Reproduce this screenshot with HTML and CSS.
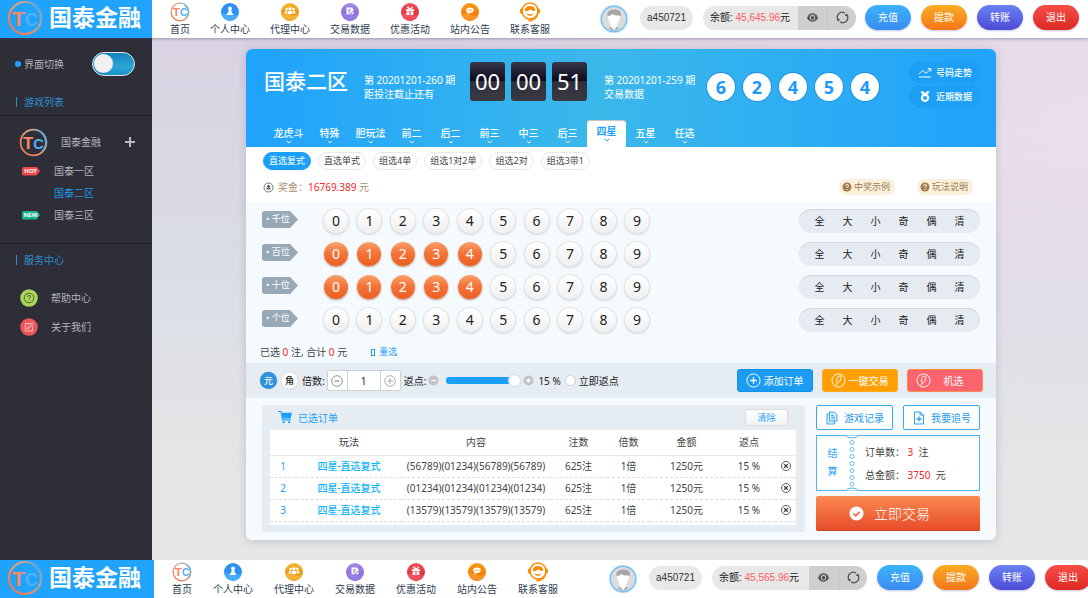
FILE: index.html
```html
<!DOCTYPE html>
<html lang="zh-CN">
<head>
<meta charset="utf-8">
<meta name="viewport" content="width=device-width, initial-scale=1">
<title>国泰金融</title>
<link rel="stylesheet" href="styles.css">
</head>
<body>
<svg class="defs" aria-hidden="true">
  <defs>
    <linearGradient id="ring" x1="1" y1="0" x2="0" y2="1"><stop offset="0" stop-color="#4aa3e8"/><stop offset=".35" stop-color="#d9a97e"/><stop offset="1" stop-color="#f76a4c"/></linearGradient>
    <linearGradient id="gBlue" x1="0" y1="0" x2="0" y2="1"><stop offset="0" stop-color="#2b8cf0"/><stop offset="1" stop-color="#2a9df6"/></linearGradient>
    <linearGradient id="gGold" x1="0" y1="0" x2="0" y2="1"><stop offset="0" stop-color="#f7b52c"/><stop offset="1" stop-color="#e08a0c"/></linearGradient>
    <linearGradient id="gViolet" x1="0" y1="0" x2="0" y2="1"><stop offset="0" stop-color="#a78bec"/><stop offset="1" stop-color="#7a5bd0"/></linearGradient>
    <linearGradient id="gRed" x1="0" y1="0" x2="0" y2="1"><stop offset="0" stop-color="#f2525a"/><stop offset="1" stop-color="#d91f35"/></linearGradient>
    <linearGradient id="gOrange" x1="0" y1="0" x2="0" y2="1"><stop offset="0" stop-color="#ff9c10"/><stop offset="1" stop-color="#ee6c08"/></linearGradient>
  </defs>
  <symbol id="tc" viewBox="0 0 36 36">
    <circle cx="18" cy="18" r="16" fill="none" stroke="url(#ring)" stroke-width="2.200"/>
    <path d="M27 6a15 15 0 0 1 1 23" fill="none" stroke="#4aa3e8" stroke-width="1.600"/>
    <text x="5" y="26" font-family="Liberation Sans" font-weight="700" font-size="21"><tspan fill="#f78a62">T</tspan><tspan fill="#55b0f2" font-size="18">C</tspan></text>
  </symbol>
  <symbol id="n-user" viewBox="0 0 20 20"><circle cx="10" cy="10" r="9" fill="url(#gBlue)"/><path d="M1.500 12.500q4-2 8 0t9 0A9 9 0 0 1 1.500 12.500z" fill="#5db8ff" opacity=".6"/><circle cx="10" cy="6.500" r="2" fill="#fff"/><path d="M8.800 8h2.400l.6 2.400 2 2.600H6.200l2-2.600z" fill="#fff"/></symbol>
  <symbol id="n-agent" viewBox="0 0 20 20"><circle cx="10" cy="10" r="9" fill="url(#gGold)"/><path d="M1.500 12.500q4-2 8 0t9 0A9 9 0 0 1 1.500 12.500z" fill="#ffc54a" opacity=".6"/><g fill="#fff"><circle cx="10" cy="6.600" r="1.700"/><circle cx="6.600" cy="7" r="1.200"/><circle cx="13.400" cy="7" r="1.200"/><path d="M7.500 12q0-3.500 2.500-3.500t2.500 3.500zM4.600 11.500q0-3 2-3l.8.4-.8 2.600zM15.400 11.500q0-3-2-3l-.8.4.8 2.600z"/></g></symbol>
  <symbol id="n-data" viewBox="0 0 20 20"><circle cx="10" cy="10" r="9" fill="url(#gViolet)"/><path d="M1.500 12.500q4-2 8 0t9 0A9 9 0 0 1 1.500 12.500z" fill="#a58bf0" opacity=".6"/><path d="M6.500 5.500h5.200l1.800 1.800v5H6.500z" fill="#fff"/><path d="M8 8h3M8 10h2" stroke="#8a6bdc"/><path d="M10 12l3.500-3" stroke="#8a6bdc" stroke-width="1"/></symbol>
  <symbol id="n-gift" viewBox="0 0 20 20"><circle cx="10" cy="10" r="9" fill="url(#gRed)"/><path d="M1.500 12.500q4-2 8 0t9 0A9 9 0 0 1 1.500 12.500z" fill="#ff6a74" opacity=".6"/><path d="M6 7.200h8v2H6zM6.600 9.800h2.900v3.200H6.600zM10.500 9.800h2.900v3.200h-2.900z" fill="#fff"/><path d="M10 7q-3-.5-2.500-2T10 7q2.500-3 2.500-1.700T10 7z" fill="none" stroke="#fff"/></symbol>
  <symbol id="n-news" viewBox="0 0 20 20"><circle cx="10" cy="10" r="9" fill="url(#gOrange)"/><path d="M1.500 12.500q4-2 8 0t9 0A9 9 0 0 1 1.500 12.500z" fill="#ffa63c" opacity=".6"/><path d="M10 5.500c2.200 0 3.800 1.100 3.800 2.700s-1.600 2.700-3.800 2.700l-2.800 1.300.5-1.900C6.700 9.800 6.200 9 6.200 8.200 6.200 6.600 7.800 5.500 10 5.500z" fill="#fff"/><path d="M8.200 8.200h.8M9.700 8.200h.8M11.200 8.200h.8" stroke="#ef7a10"/></symbol>
  <symbol id="n-service" viewBox="0 0 20 20"><circle cx="10" cy="9" r="8" fill="#fff" stroke="#ff8a00" stroke-width="1.500"/><path d="M5 9C4.500 5.500 7 4 10 4s5.500 1.500 5 5c-1.800.4-3.200-.6-4.600-1.700C9 8.600 6.800 9.500 5 9z" fill="#ff8a00"/><path d="M2.300 6L0 7.500v3.200l2.300 1.500zM17.700 6L20 7.500v3.200l-2.300 1.500z" fill="#ff8a00"/><path d="M7.300 12q2.700 2.400 5.400 0M17.700 12.500q-1.700 5.500-7.200 6" fill="none" stroke="#ff8a00" stroke-width="1.300"/><path d="M8.500 17.500h3v2h-3z" fill="#ff8a00"/></symbol>
  <symbol id="avatar" viewBox="0 0 30 30"><circle cx="15" cy="15" r="14.500" fill="#dff1fe"/><circle cx="15" cy="15" r="12.700" fill="#dcdcdc" stroke="#72c1f6" stroke-width="1.400"/><path d="M8.500 12q-1.500-6 6.500-6.500t7 6.500z" fill="#a7a5a5"/><path d="M9 12q3 0 4-2 3 2 8 1.500 0 6-3 8.500l.5 4q-3 2.500-7.500 0l.8-4Q9 17 9 12z" fill="#fff"/><path d="M9.500 24l3-1.500 2.500 4.500q-3 0-5.500-3zM20.500 24l-3-1.500L15 27q3 0 5.500-3z" fill="#b5b5b5"/></symbol>
  <symbol id="eye" viewBox="0 0 14 12"><path d="M1 6.500q2.500-4 6-4t6 4q-2.500 4-6 4t-6-4z" fill="#505050"/><circle cx="7" cy="6.300" r="2.900" fill="#d0cece"/><circle cx="7" cy="6.300" r="2" fill="#505050"/><path d="M2 4Q7-.5 12 4" fill="none" stroke="#505050"/></symbol>
  <symbol id="sync" viewBox="0 0 14 14"><g fill="none" stroke="#555" stroke-width="1.400"><path d="M2.300 9.500A5.200 5.200 0 0 1 9.500 2.300M11.700 4.500a5.200 5.200 0 0 1-7.200 7.200"/></g><path d="M.5 8.500l2 3 2-2.800zM13.500 5.500l-2-3-2 2.800z" fill="#555"/></symbol>
  <symbol id="chev" viewBox="0 0 6 4"><path d="M.8.8L3 3 5.200.8" fill="none" stroke="currentColor"/></symbol>
  <symbol id="trend" viewBox="0 0 14 12"><path d="M1 7.500l3.500-3.500L8 7l4.500-4.500M9.800 2h3v3M1 10.500h12" fill="none" stroke="#fff"/></symbol>
  <symbol id="medal" viewBox="0 0 12 14"><path d="M1.500 1l3 .5L6 4l1.500-2.500 3-.5-1 3.500h-7z" fill="#fff"/><circle cx="6" cy="8.500" r="3.300" fill="none" stroke="#fff" stroke-width="2.400"/></symbol>
  <symbol id="coin" viewBox="0 0 12 12"><circle cx="6" cy="6" r="4.900" fill="none" stroke="#666"/><path d="M6 2.800l2.600 2.800H3.400zM4 6.200h4v2H4z" fill="#555"/></symbol>
  <symbol id="ask" viewBox="0 0 10 10"><circle cx="5" cy="5" r="4.500" fill="#a27c52"/><path d="M3.500 4q0-1.500 1.500-1.500T6.500 4Q6.500 4.800 5 5.600v.4M5 7v1" fill="none" stroke="#fdf1da"/></symbol>
  <symbol id="bolt" viewBox="0 0 16 16"><circle cx="8" cy="8" r="7" fill="none" stroke="#fff"/><path d="M7.500 3.500h3.500L9.500 7h1.300L5.500 13l1.200-4.500H5.300z" fill="none" stroke="#fff" stroke-width=".8"/></symbol>
  <symbol id="add" viewBox="0 0 16 16"><circle cx="8" cy="8" r="7" fill="none" stroke="#fff"/><path d="M8 4.500v7M4.500 8h7" stroke="#fff" stroke-width="1.400"/></symbol>
  <symbol id="minus-o" viewBox="0 0 12 12"><circle cx="6" cy="6" r="5.300" fill="none" stroke="#777" stroke-width=".8"/><path d="M3.500 6h5" stroke="#777"/></symbol>
  <symbol id="plus-o" viewBox="0 0 12 12"><circle cx="6" cy="6" r="5.300" fill="none" stroke="#999" stroke-width=".8"/><path d="M3 6h6M6 3v6" stroke="#999" stroke-width=".8"/></symbol>
  <symbol id="minus-g" viewBox="0 0 12 12"><circle cx="6" cy="6" r="5.500" fill="#c2c2c2"/><path d="M3.500 6h5" stroke="#fff" stroke-width="1.400"/></symbol>
  <symbol id="plus-g" viewBox="0 0 12 12"><circle cx="6" cy="6" r="5.500" fill="#c2c2c2"/><path d="M3.500 6h5M6 3.500v5" stroke="#fff" stroke-width="1.600"/></symbol>
  <symbol id="cart" viewBox="0 0 16 14"><path d="M0 .5h3L5 9.500h8.500" fill="none" stroke="#1a9ffb" stroke-width="1.200"/><path d="M3.500 2H15l-1.500 6H5z" fill="#1a9ffb"/><circle cx="6" cy="12" r="1.200" fill="#1a9ffb"/><circle cx="12" cy="12" r="1.200" fill="#1a9ffb"/></symbol>
  <symbol id="del" viewBox="0 0 12 12"><circle cx="6" cy="6" r="4.500" fill="none" stroke="#555"/><path d="M4.200 4.200l3.600 3.600M7.800 4.200L4.200 7.800" stroke="#444" stroke-width="1.300"/></symbol>
  <symbol id="docs" viewBox="0 0 12 14"><path d="M3.500 1h4.800L11 3.500V10H3.500zM3.500 3H1v10h7.500v-3M5 4.500h2.500M5 6.200h4M5 8h4" fill="#d6edff" stroke="#2a9fe8" stroke-width=".9"/></symbol>
  <symbol id="doc-add" viewBox="0 0 12 14"><path d="M1.500 1H7l3.500 3v9h-9zM7 1v3h3.500" fill="none" stroke="#2a9fe8"/><path d="M6 5.500v5M3.500 8h5" stroke="#2a9fe8" stroke-width="1.300"/></symbol>
  <symbol id="check" viewBox="0 0 16 16"><circle cx="8" cy="8" r="7.500" fill="#fff"/><path d="M4.800 8l2.400 2.500 4.200-4.300" fill="none" stroke="#ee6a3c" stroke-width="1.800"/></symbol>
  <symbol id="help" viewBox="0 0 18 18"><circle cx="9" cy="9" r="8.800" fill="#a9d65a"/><circle cx="9" cy="9" r="4.800" fill="none" stroke="#45622a" stroke-width=".9"/><path d="M7.500 8q0-1.600 1.500-1.600T10.500 8q0 .8-1.500 1.600M9 10.600v1" fill="none" stroke="#45622a" stroke-width=".9"/></symbol>
  <symbol id="about" viewBox="0 0 18 18"><circle cx="9" cy="9" r="8.800" fill="#ec5559"/><path d="M10.500 5.500H5.300v7.500h7.200V8.500M7.500 10.700l.4-1.800 4.400-4.400 1.200 1.200-4.300 4.400z" fill="none" stroke="#ffc9c4" stroke-width=".9"/></symbol>
  <symbol id="ticket" viewBox="0 0 12 56"><path d="M0 .5q1 2.500 6 2.500T12 .5M0 55.500q1-2.500 6-2.500t6 2.500" fill="#f5faff" stroke="#55b4ee"/><g fill="#fff" stroke="#6bbdf0"><circle cx="6" cy="7.500" r="2"/><circle cx="6" cy="14.500" r="2"/><circle cx="6" cy="21.500" r="2"/><circle cx="6" cy="28.500" r="2"/><circle cx="6" cy="35.500" r="2"/><circle cx="6" cy="42.500" r="2"/><circle cx="6" cy="49" r="2"/></g></symbol>
</svg>

<header class="bar">
  <a class="brand" href="#"><svg class="brand-mark"><use href="#tc"/></svg><span>国泰金融</span></a>
  <nav class="nav">
    <a href="#"><svg><use href="#tc"/></svg>首页</a>
    <a href="#"><svg><use href="#n-user"/></svg>个人中心</a>
    <a href="#"><svg><use href="#n-agent"/></svg>代理中心</a>
    <a href="#"><svg><use href="#n-data"/></svg>交易数据</a>
    <a href="#"><svg><use href="#n-gift"/></svg>优惠活动</a>
    <a href="#"><svg><use href="#n-news"/></svg>站内公告</a>
    <a href="#"><svg><use href="#n-service"/></svg>联系客服</a>
  </nav>
  <div class="account">
    <svg class="avatar"><use href="#avatar"/></svg>
    <span class="user">a450721</span>
    <div class="balance"><span class="amount">余额: <b>45,645.96</b>元</span><button type="button" aria-label="隐藏余额"><svg><use href="#eye"/></svg></button><button type="button" aria-label="刷新余额"><svg><use href="#sync"/></svg></button></div>
    <div class="cash"><button type="button" class="c-blue">充值</button><button type="button" class="c-orange">提款</button><button type="button" class="c-indigo">转账</button><button type="button" class="c-red">退出</button></div>
  </div>
</header>

<div class="body">
  <aside class="side">
    <label class="switch-row"><span class="dot"></span><span>界面切换</span><input type="checkbox" class="switch"></label>
    <h2 class="side-title">游戏列表</h2>
    <section class="games">
      <a class="group" href="#"><svg><use href="#tc"/></svg><span>国泰金融</span><i class="plus"></i></a>
      <a class="game" href="#"><i class="flag hot">HOT</i><span>国泰一区</span></a>
      <a class="game on" href="#"><span>国泰二区</span></a>
      <a class="game" href="#"><i class="flag new">NEW</i><span>国泰三区</span></a>
    </section>
    <h2 class="side-title plain">服务中心</h2>
    <section class="services">
      <a href="#"><svg><use href="#help"/></svg>帮助中心</a>
      <a href="#"><svg><use href="#about"/></svg>关于我们</a>
    </section>
  </aside>

  <main class="main">
    <div class="panel">
      <div class="hero">
        <div class="hero-top">
          <h1>国泰二区</h1>
          <p class="issue">第 20201201-260 期<br>距投注截止还有</p>
          <div class="timer"><span>00</span><span>00</span><span>51</span></div>
          <p class="issue">第 20201201-259 期<br>交易数据</p>
          <div class="result"><span>6</span><span>2</span><span>4</span><span>5</span><span>4</span></div>
          <div class="links"><a href="#"><svg><use href="#trend"/></svg>号码走势</a><a href="#"><svg><use href="#medal"/></svg>近期数据</a></div>
        </div>
        <nav class="tabs">
          <a class="wide" href="#">龙虎斗<svg><use href="#chev"/></svg></a>
          <a href="#">特殊<svg><use href="#chev"/></svg></a>
          <a class="wide" href="#">胆玩法<svg><use href="#chev"/></svg></a>
          <a href="#">前二<svg><use href="#chev"/></svg></a>
          <a href="#">后二<svg><use href="#chev"/></svg></a>
          <a href="#">前三<svg><use href="#chev"/></svg></a>
          <a href="#">中三<svg><use href="#chev"/></svg></a>
          <a href="#">后三<svg><use href="#chev"/></svg></a>
          <a class="on" href="#">四星<svg><use href="#chev"/></svg></a>
          <a href="#">五星<svg><use href="#chev"/></svg></a>
          <a href="#">任选<svg><use href="#chev"/></svg></a>
        </nav>
      </div>

      <div class="modes">
        <div class="chips"><button type="button" class="on">直选复式</button><button type="button">直选单式</button><button type="button">组选4单</button><button type="button">组选1对2单</button><button type="button">组选2对</button><button type="button">组选3带1</button></div>
        <div class="prize"><svg><use href="#coin"/></svg><span>奖金：<b>16769.389</b> 元</span><div class="tips"><a href="#"><svg><use href="#ask"/></svg>中奖示例</a><a href="#"><svg><use href="#ask"/></svg>玩法说明</a></div></div>
      </div>

      <div class="picker">
        <div class="row"><span class="tag">• 千位</span>
          <div class="balls"><button type="button">0</button><button type="button">1</button><button type="button">2</button><button type="button">3</button><button type="button">4</button><button type="button">5</button><button type="button">6</button><button type="button">7</button><button type="button">8</button><button type="button">9</button></div>
          <div class="quick"><button type="button">全</button><button type="button">大</button><button type="button">小</button><button type="button">奇</button><button type="button">偶</button><button type="button">清</button></div></div>
        <div class="row"><span class="tag">• 百位</span>
          <div class="balls"><button type="button" class="on">0</button><button type="button" class="on">1</button><button type="button" class="on">2</button><button type="button" class="on">3</button><button type="button" class="on">4</button><button type="button">5</button><button type="button">6</button><button type="button">7</button><button type="button">8</button><button type="button">9</button></div>
          <div class="quick"><button type="button">全</button><button type="button">大</button><button type="button">小</button><button type="button">奇</button><button type="button">偶</button><button type="button">清</button></div></div>
        <div class="row"><span class="tag">• 十位</span>
          <div class="balls"><button type="button" class="on">0</button><button type="button" class="on">1</button><button type="button" class="on">2</button><button type="button" class="on">3</button><button type="button" class="on">4</button><button type="button">5</button><button type="button">6</button><button type="button">7</button><button type="button">8</button><button type="button">9</button></div>
          <div class="quick"><button type="button">全</button><button type="button">大</button><button type="button">小</button><button type="button">奇</button><button type="button">偶</button><button type="button">清</button></div></div>
        <div class="row"><span class="tag">• 个位</span>
          <div class="balls"><button type="button">0</button><button type="button">1</button><button type="button">2</button><button type="button">3</button><button type="button">4</button><button type="button">5</button><button type="button">6</button><button type="button">7</button><button type="button">8</button><button type="button">9</button></div>
          <div class="quick"><button type="button">全</button><button type="button">大</button><button type="button">小</button><button type="button">奇</button><button type="button">偶</button><button type="button">清</button></div></div>
        <p class="summary"><span>已选 <b>0</b> 注, 合计 <b>0</b> 元</span><a href="#"><i></i>重选</a></p>
      </div>

      <div class="controls">
        <button type="button" class="unit on">元</button>
        <button type="button" class="unit">角</button>
        <label for="times">倍数:</label>
        <div class="stepper"><button type="button" aria-label="减少"><svg><use href="#minus-o"/></svg></button><input id="times" type="text" value="1"><button type="button" aria-label="增加"><svg><use href="#plus-o"/></svg></button></div>
        <label for="rebate">返点:</label>
        <button type="button" class="nudge" aria-label="降低返点"><svg><use href="#minus-g"/></svg></button>
        <input id="rebate" class="range" type="range" min="0" max="15" value="15">
        <button type="button" class="nudge" aria-label="提高返点"><svg><use href="#plus-g"/></svg></button>
        <output for="rebate">15 %</output>
        <label class="instant"><input type="radio" name="instant">立即返点</label>
        <div class="actions"><button type="button" class="a-blue"><svg><use href="#add"/></svg><span>添加订单</span></button><button type="button" class="a-orange"><svg><use href="#bolt"/></svg><span>一键交易</span></button><button type="button" class="a-pink"><svg><use href="#bolt"/></svg><span>机选</span></button></div>
      </div>

      <div class="lower">
        <section class="orders">
          <div class="orders-head"><svg><use href="#cart"/></svg><h3>已选订单</h3><button type="button">清除</button></div>
          <div class="sheet">
            <table>
              <colgroup><col class="w-idx"><col class="w-play"><col class="w-text"><col class="w-count"><col class="w-times"><col class="w-money"><col class="w-rate"><col class="w-del"></colgroup>
              <thead><tr><th></th><th>玩法</th><th>内容</th><th>注数</th><th>倍数</th><th>金额</th><th>返点</th><th></th></tr></thead>
              <tbody>
                <tr><td class="idx">1</td><td class="play">四星-直选复式</td><td>(56789)(01234)(56789)(56789)</td><td>625注</td><td>1倍</td><td>1250元</td><td>15 %</td><td><button type="button" aria-label="删除"><svg><use href="#del"/></svg></button></td></tr>
                <tr><td class="idx">2</td><td class="play">四星-直选复式</td><td>(01234)(01234)(01234)(01234)</td><td>625注</td><td>1倍</td><td>1250元</td><td>15 %</td><td><button type="button" aria-label="删除"><svg><use href="#del"/></svg></button></td></tr>
                <tr><td class="idx">3</td><td class="play">四星-直选复式</td><td>(13579)(13579)(13579)(13579)</td><td>625注</td><td>1倍</td><td>1250元</td><td>15 %</td><td><button type="button" aria-label="删除"><svg><use href="#del"/></svg></button></td></tr>
              </tbody>
            </table>
          </div>
        </section>
        <section class="checkout">
          <div class="pair"><button type="button"><svg><use href="#docs"/></svg>游戏记录</button><button type="button"><svg><use href="#doc-add"/></svg>我要追号</button></div>
          <div class="settle"><strong>结<br>算</strong><svg><use href="#ticket"/></svg><p>订单数： <b>3</b>&nbsp; 注<br>总金额： <b>3750</b>&nbsp; 元</p></div>
          <button type="button" class="submit"><svg><use href="#check"/></svg>立即交易</button>
        </section>
      </div>
    </div>
  </main>
</div>

<footer class="bar bar-foot">
  <a class="brand" href="#"><svg class="brand-mark"><use href="#tc"/></svg><span>国泰金融</span></a>
  <nav class="nav">
    <a href="#"><svg><use href="#tc"/></svg>首页</a>
    <a href="#"><svg><use href="#n-user"/></svg>个人中心</a>
    <a href="#"><svg><use href="#n-agent"/></svg>代理中心</a>
    <a href="#"><svg><use href="#n-data"/></svg>交易数据</a>
    <a href="#"><svg><use href="#n-gift"/></svg>优惠活动</a>
    <a href="#"><svg><use href="#n-news"/></svg>站内公告</a>
    <a href="#"><svg><use href="#n-service"/></svg>联系客服</a>
  </nav>
  <div class="account">
    <svg class="avatar"><use href="#avatar"/></svg>
    <span class="user">a450721</span>
    <div class="balance"><span class="amount">余额: <b>45,565.96</b>元</span><button type="button" aria-label="隐藏余额"><svg><use href="#eye"/></svg></button><button type="button" aria-label="刷新余额"><svg><use href="#sync"/></svg></button></div>
    <div class="cash"><button type="button" class="c-blue">充值</button><button type="button" class="c-orange">提款</button><button type="button" class="c-indigo">转账</button><button type="button" class="c-red">退出</button></div>
  </div>
</footer>
</body>
</html>
```
FILE: styles.css
```css
* { box-sizing: border-box; }
body {
  margin: 0;
  min-height: 100vh;
  display: flex;
  flex-direction: column;
  overflow-x: hidden;
  font: 10px/14px "Noto Sans", "Noto Sans CJK SC", sans-serif;
  color: #444;
  background: #e6e6e6;
}
.defs { position: absolute; width: 0; height: 0; }
h1, h2, h3, p { margin: 0; font-weight: 400; }
a { color: inherit; text-decoration: none; }
b, i { font-weight: 400; font-style: normal; }
svg { display: block; flex: none; }
button, input { font: inherit; color: inherit; margin: 0; padding: 0; }
button { border: 0; background: none; white-space: nowrap; cursor: pointer; }

/* Top and bottom bars */
.bar {
  position: relative;
  z-index: 1;
  display: flex;
  align-items: center;
  height: 38px;
  overflow: hidden;
  background: #fff;
  font-family: "Liberation Sans", "Noto Sans CJK SC", sans-serif;
  white-space: nowrap;
}
header.bar { box-shadow: 0 1px 3px rgba(80, 70, 100, .45); overflow: visible; }
.brand {
  flex: none;
  display: flex;
  align-items: center;
  gap: 6px;
  width: 152px;
  height: 38px;
  padding: 0 0 2px 7px;
  background: #1fa3fc;
  color: #fff;
  font-size: 23px;
  font-weight: 700;
  line-height: 34px;
}
.brand-mark { width: 36px; height: 36px; }
.nav { display: flex; gap: 20px; padding-left: 18px; color: #2f3d50; }
.nav a { display: flex; flex-direction: column; align-items: center; line-height: 15px; }
.nav svg { width: 20px; height: 20px; margin-top: 1px; }
.account { display: flex; align-items: center; margin-left: auto; padding: 0 9px 3px 0; }
.avatar { width: 30px; height: 30px; margin-right: 11px; margin-top: 3px; }
.user { width: 53px; height: 24px; margin-right: 10px; border-radius: 12px; background: #e8e8e8; line-height: 24px; text-align: center; color: #333; }
.balance { display: flex; width: 153px; height: 24px; border-radius: 12px; overflow: hidden; background: #e8e8e8; color: #222; line-height: 24px; }
.amount { flex: 1; padding-left: 7px; }
.amount b { color: #ff5c60; }
.balance button { display: flex; align-items: center; justify-content: center; width: 29px; background: #d0cece; }
.balance button + button { border-left: 1px solid #c4c2c2; }
.balance svg { width: 13px; height: 13px; }
.cash { display: flex; gap: 10px; margin-left: 9px; }
.cash button { width: 46px; height: 25px; border-radius: 13px; color: #fff; box-shadow: 0 1px 2px rgba(60, 60, 140, .3); }
.c-blue { background: linear-gradient(#3cb2fc, #3a8cf0); }
.c-orange { background: linear-gradient(#fbac22, #f4761a); }
.c-indigo { background: linear-gradient(#6a80f4, #4c4cd4); }
.c-red { background: linear-gradient(#f64e48, #dc2a24); }
.bar-foot .brand { width: 154px; }
.bar-foot .nav { gap: 21px; }
.bar-foot .account { flex: none; margin-left: 50px; padding-right: 0; }
.bar-foot .balance { width: 155px; }
.bar-foot .cash { margin-left: 10px; }

.body { flex: 1; display: flex; }

/* Sidebar */
.side { flex: none; width: 152px; background: #2e2e38; color: #b5b5b8; }
.switch-row { display: flex; align-items: center; gap: 3px; height: 51px; padding: 0 17px 0 15px; }
.dot { width: 6px; height: 6px; border-radius: 50%; background: #1fa3fc; }
.switch {
  appearance: none;
  display: flex;
  align-items: center;
  width: 43px;
  height: 24px;
  margin-left: auto;
  padding: 1px;
  border: 1px solid #dfe6ea;
  border-radius: 12px;
  background: linear-gradient(#1485bc, #2ba6d6 60%, #1b93c8);
}
.switch::before { content: ""; width: 19px; height: 19px; border-radius: 50%; background: #f1f1f3; }
.side-title { display: flex; align-items: center; height: 27px; padding-left: 16px; border-bottom: 1px solid #1f1f27; color: #2c90d0; font-size: 10px; }
.side-title::before { content: ""; width: 1px; height: 10px; margin-right: 7px; background: #2c90d0; }
.side-title.plain { height: 31px; border: 0; }
.games { padding: 11px 0 17px; border-bottom: 1px solid #1f1f27; }
.group { display: flex; align-items: center; height: 30px; padding: 0 17px 0 19px; }
.group svg { width: 29px; height: 29px; margin-right: 13px; }
.plus { width: 10px; height: 10px; margin-left: auto; background: linear-gradient(#bbb, #bbb) center / 10px 2px no-repeat, linear-gradient(#bbb, #bbb) center / 2px 10px no-repeat; }
.game { display: grid; grid-template-columns: 32px 1fr; align-items: center; height: 22px; padding-left: 22px; }
.game:nth-child(2) { margin-top: 3px; }
.game span { grid-column: 2; grid-row: 1; }
.game.on { color: #2196e0; }
.flag { width: 18px; height: 9px; clip-path: polygon(0 0, 80% 0, 100% 50%, 80% 100%, 0 100%); color: #fff; font-size: 6px; font-weight: 700; line-height: 9px; text-align: center; padding-right: 1px; border-radius: 2px; }
.hot { background: #f4474c; }
.new { background: #1bb587; }
.services { padding-top: 8px; }
.services a { display: flex; align-items: center; gap: 13px; height: 29px; padding-left: 20px; }
.services svg { width: 18px; height: 18px; }

/* Content panel */
.main {
  flex: 1;
  padding: 11px 0 18px 2px;
  background:
    radial-gradient(ellipse at 100% 15%, rgba(240, 224, 238, .8), transparent 55%),
    linear-gradient(rgba(216, 208, 226, .9), rgba(214, 219, 229, .8) 45%, rgba(230, 230, 230, 0) 85%);
}
.panel { width: 750px; max-width: 100%; margin: 0 auto; border-radius: 6px; overflow: hidden; background: #f5faff; box-shadow: 0 1px 10px rgba(70, 70, 90, .22); }
.hero { display: flex; flex-direction: column; height: 98px; background: linear-gradient(90deg, #1fa3fc, #3bb8ea 47%, #1fa3fc); color: #fff; }
.hero-top { display: flex; padding: 13px 16px 0 18px; }
.hero h1 { width: 100px; font-size: 21px; line-height: 38px; font-weight: 500; }
.issue { width: 106px; padding-top: 11px; }
.timer { display: flex; gap: 6px; margin-right: 17px; }
.timer span { width: 35px; height: 39px; border-radius: 3px; background: linear-gradient(#38384a, #0b0a1c 50%, #30303c 50%, #3a3a42); font-size: 22px; line-height: 39px; text-align: center; }
.result { display: flex; gap: 8px; padding-top: 11px; }
.result span { width: 28px; height: 28px; border-radius: 50%; background: #fff; box-shadow: 0 0 0 1px #2292de; color: #1b9af8; font: 700 18px/28px "Noto Sans", sans-serif; text-align: center; }
.timer + .issue { width: 103px; }
.links { display: flex; flex-direction: column; gap: 3px; margin-left: auto; }
.links a { display: flex; align-items: center; gap: 4px; width: 70px; height: 21px; padding-left: 8px; border-radius: 11px; background: #1c9ff5; box-shadow: 0 0 1px #1581cf; font-size: 9px; font-weight: 500; }
.links svg { width: 14px; height: 13px; }
.tabs { display: flex; margin-top: auto; padding-left: 21px; font-weight: 500; }
.tabs a { display: flex; flex-direction: column; align-items: center; width: 39px; height: 27px; padding-top: 6px; line-height: 14px; }
.tabs .wide { width: 43px; }
.tabs svg { width: 6px; height: 4px; }
.tabs .on { padding-top: 4px; border-radius: 3px 3px 0 0; background: #fff; color: #1fa3fc; font-weight: 700; box-shadow: inset 0 1px 1px rgba(0, 0, 0, .25); }
.modes { height: 55px; padding: 5px 16px 0 17px; background: #fff; }
.chips { display: flex; gap: 7px; }
.chips button { height: 18px; padding: 0 5px; border: 1px solid #e3eaf1; border-radius: 9px; font-size: 9px; line-height: 16px; }
.chips .on { border-color: #1b9ffa; background: #1b9ffa; color: #fff; }
.prize { display: flex; align-items: center; gap: 4px; padding-top: 10px; color: #a98f70; }
.prize > svg { width: 11px; height: 11px; }
.prize b, .summary b, .settle b { color: #f3262b; }
.tips { display: flex; gap: 24px; margin-left: auto; padding-right: 8px; }
.tips a { display: flex; align-items: center; gap: 2px; height: 14px; padding: 0 4px 0 2px; border-radius: 7px; background: #fdf1da; box-shadow: 0 0 2px #dcc79f; color: #9a7a55; font-size: 9px; }
.tips svg { width: 10px; height: 10px; }

/* Number picker */
.picker { display: flex; flex-direction: column; gap: 9px; padding: 7px 16px 0; }
.row { display: flex; align-items: flex-start; height: 24px; }
.tag { width: 36px; height: 17px; margin-top: 2px; padding-left: 4px; border-radius: 3px; clip-path: polygon(0 0, 78% 0, 100% 50%, 78% 100%, 0 100%); background: #97a9b7; color: #fff; font-size: 9px; line-height: 16px; }
.balls { display: flex; justify-content: space-between; width: 325px; margin-left: 26px; }
.balls button { width: 24px; height: 24px; border-radius: 50%; background: linear-gradient(#fff, #f0f0f0); box-shadow: 0 0 0 1px #e6e4e0, 0 1px 3px rgba(0, 0, 0, .25); color: #222; font-size: 14px; line-height: 24px; text-align: center; }
.balls .on { background: linear-gradient(#fba168, #f4743a 45%, #ec5e1e); box-shadow: 0 1px 2px rgba(120, 60, 20, .55); color: #fff; }
.quick { display: flex; justify-content: space-between; width: 181px; height: 24px; margin-left: auto; padding: 0 15px; border-radius: 12px; background: #e5ebf1; box-shadow: inset 0 1px 1px #d2d7dc; color: #222; }
.quick button { width: 11px; }
.summary { display: flex; gap: 24px; padding: 4px 0; margin-left: -2px; }
.summary a { display: flex; align-items: center; gap: 4px; color: #1b9ffa; font-size: 9px; }
.summary i { width: 4px; height: 7px; border: 1px solid #1b9ffa; }

/* Bet controls */
.controls { display: flex; align-items: center; height: 35px; padding: 0 13px 0 14px; background: #e5ecf2; color: #222; white-space: nowrap; }
.unit { width: 17px; height: 17px; margin-right: 4px; border-radius: 50%; background: #fff; box-shadow: 0 0 1px #999; font-weight: 500; font-size: 9px; }
.unit.on { background: #2e93de; color: #fff; }
.stepper { display: flex; width: 74px; height: 21px; margin: 0 3px 0 2px; border: 1px solid #ccd2d8; border-radius: 2px; background: #fff; }
.stepper button { display: flex; align-items: center; justify-content: center; width: 20px; }
.stepper input { width: 34px; border: solid #ccd2d8; border-width: 0 1px; background: none; text-align: center; }
.stepper svg { width: 12px; height: 12px; }
.nudge { margin-left: 2px; }
.nudge svg { width: 11px; height: 11px; }
.range { appearance: none; width: 74px; height: 12px; margin: 0 3px 0 7px; background: none; }
.range::-webkit-slider-runnable-track { height: 7px; border-radius: 3px; background: #1b9ffa; }
.range::-webkit-slider-thumb { appearance: none; width: 11px; height: 11px; margin-top: -2px; border-radius: 50%; background: #fff; box-shadow: 0 0 1px 1px #d5dbe2; }
.range + .nudge { margin: 0 4px 0 0; }
.instant { display: flex; align-items: center; gap: 3px; margin-left: 4px; }
.instant input { appearance: none; width: 11px; height: 11px; border: 1px solid #ccc; border-radius: 50%; background: #fff; }
.actions { display: flex; gap: 9px; margin-left: auto; }
.actions button { display: flex; align-items: center; gap: 2px; width: 76px; height: 23px; padding: 0 8px; border: 1px solid; border-radius: 3px; color: #fff; }
.actions span { flex: 1; text-align: center; }
.actions svg { width: 15px; height: 15px; }
.actions .a-blue { border-color: #1090e6; background: #1b9bf2; }
.actions .a-orange { border-color: #ffa91a; background: #ff9f03; }
.actions .a-pink { border-color: #fb8a52; background: #fb646c; }

/* Orders and checkout */
.lower { display: flex; gap: 11px; padding: 7px 16px 8px; }
.orders { flex: 1; padding: 0 9px 7px 8px; border-radius: 3px; background: #e5ecf2; }
.orders-head { display: flex; align-items: center; height: 25px; padding: 0 8px; color: #1b9ffa; }
.orders-head svg { width: 15px; height: 13px; margin-right: 5px; }
.orders-head h3 { font-size: 10px; }
.orders-head button { width: 43px; height: 17px; margin-left: auto; border: 1px solid #dcdcdc; border-radius: 2px; background: linear-gradient(#fff, #f1f3f5); font-size: 9px; line-height: 15px; }
.sheet { padding-bottom: 3px; background: #fff; }
table { width: 100%; border-collapse: collapse; table-layout: fixed; text-align: center; white-space: nowrap; }
th, td { height: 22px; padding: 0; border-bottom: 1px dashed #ddd; }
th { height: 25px; border-bottom: 1px solid #e8e8e8; font-weight: 400; }
td button { display: block; margin: 0 auto; }
td svg { width: 12px; height: 12px; }
.idx { color: #1b9ffa; }
.play { color: #14b4f8; font-weight: 500; }
.w-idx { width: 26px; }
.w-play { width: 106px; }
.w-count { width: 57px; }
.w-times { width: 43px; }
.w-money { width: 73px; }
.w-rate { width: 52px; }
.w-del { width: 21px; }
.checkout { display: flex; flex-direction: column; gap: 5px; width: 164px; }
.pair { display: flex; justify-content: space-between; }
.pair button { display: flex; align-items: center; gap: 6px; width: 77px; height: 25px; padding-left: 9px; border: 1px solid #3ba9ee; border-radius: 2px; background: #fff; color: #1f9bec; }
.pair svg { width: 12px; height: 14px; }
.settle { display: flex; height: 56px; border: 1px solid #55b4ee; background: #fff; }
.settle strong { width: 29px; padding-left: 2px; padding-top: 8px; color: #1fa3fc; font-weight: 400; line-height: 18px; text-align: center; }
.settle svg { width: 12px; height: 56px; margin-top: -1px; }
.settle p { padding: 5px 0 0 7px; line-height: 23px; }
.submit { display: flex; align-items: center; justify-content: center; gap: 10px; height: 35px; padding-right: 17px; border-radius: 2px; background: linear-gradient(#fb8a52, #e64c28); box-shadow: inset 0 -1px 0 #c8431f; color: #fff; font-size: 14px; font-weight: 300; }
.submit svg { width: 15px; height: 15px; }
```
